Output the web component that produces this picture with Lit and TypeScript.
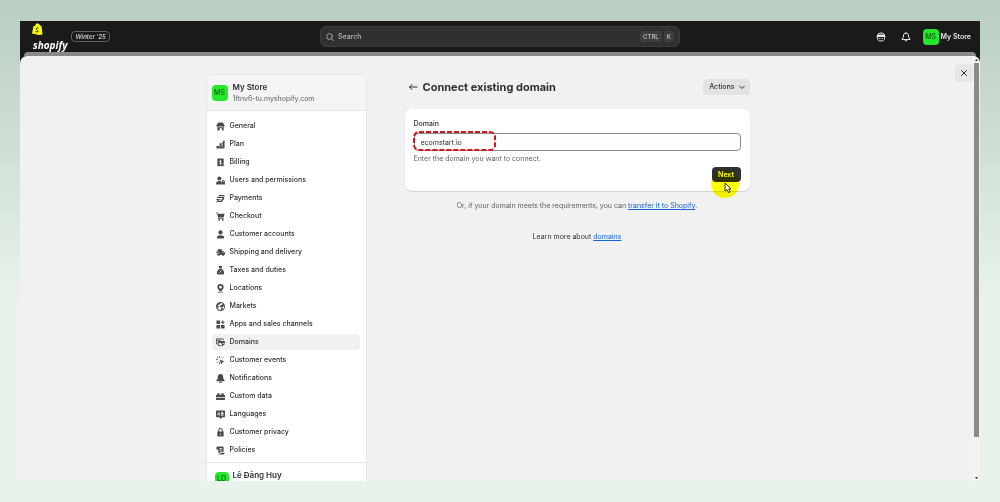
import { LitElement, html, css, svg, SVGTemplateResult } from "lit";
import { customElement, state } from "lit/decorators.js";
import { classMap } from "lit/directives/class-map.js";

const icons: Record<string, SVGTemplateResult> = {
  general: svg`<path d="M5 1h10l4 6v1.500a2.500 2.500 0 0 1-2 2.300V18a1 1 0 0 1-1 1h-3v-5H8v5H4a1 1 0 0 1-1-1v-7.200A2.500 2.500 0 0 1 1 8.500V7z"/><path class="cut" d="M4 10h12v1.500H4z"/>`,
  plan: svg`<path d="M1 19v-5l4-2v2l3-1V8l4-2v5l2-1V5l2-1V1h3v17a1 1 0 0 1-1 1z"/><path class="cut" d="M8 12h1.300v4H8zM13 10h1.300v6H13z"/>`,
  billing: svg`<path d="M3 1h14v18l-3-2-2 2-2-2-2 2-2-2-3 2z"/><path class="line" d="M12.500 6.500C10 5 7 6 7.500 8c.5 1.700 5 1.300 5 3.500 0 2-3 2.500-5 1.200M10 4v11"/>`,
  users: svg`<circle cx="7.500" cy="5.500" r="4.500"/><path d="M0 18c0-5 3-7 7.500-7 2 0 3 .3 4 1v7H1a1 1 0 0 1-1-1zM13 13v-1.500a3 3 0 0 1 6 0V13h1v6h-8v-6zm1.700 0h2.600v-1.500a1.300 1.300 0 0 0-2.600 0z"/>`,
  payments: svg`<path d="M7 2h12l-1.500 11H12l3-4H5zM4 6h3L5 9H1zM1 11h10l-1 2H6v2h5l3-3h3l-4 6H3l-3 1v-2l3-1V13H0z"/><path class="cut" d="M7 5h11v1.500H7z"/>`,
  checkout: svg`<path d="M0 1h3.500l1 3H19l-2 8H6.500l.4 1.500H17V15H5.300L2.500 3H0z"/><circle cx="7" cy="17.500" r="2"/><circle cx="15" cy="17.500" r="2"/>`,
  person: svg`<circle cx="10" cy="5.500" r="4.700"/><path d="M2 17c0-4 3-5.500 8-5.500s8 1.500 8 5.500c0 1-1 2-2 2H4c-1 0-2-1-2-2z"/>`,
  shipping: svg`<path d="M4 3h9v3h3l4 4.500V15h-2a3 3 0 0 1-5.500 0H9a3 3 0 0 1-5.500 0H2v-3h5v-1.500H0V9h5V7.500H1V6h3z"/><circle cx="6.200" cy="15" r="2"/><circle cx="15.500" cy="15" r="2"/><path class="cut" d="M14 7.500h1.500l2 2.500H14z"/>`,
  taxes: svg`<path d="M7 0h6l1 1-1.500 4h-5L6 1zM7 6h6c3 2.500 5 6 5 9.500 0 2.500-1.500 3.500-4 3.500H6c-2.500 0-4-1-4-3.500C2 12 4 8.500 7 6z"/><path class="line" d="m7.500 15 5-5.500M7.500 10v.5M12.500 14v.5"/>`,
  location: svg`<path fill-rule="evenodd" d="M10 0a7 7 0 0 1 7 7c0 3.500-3 6-5 8.500h-4C6 13 3 10.500 3 7a7 7 0 0 1 7-7zm0 4a3 3 0 1 0 0 6 3 3 0 0 0 0-6z"/><path d="M5 17h10v2H5z"/>`,
  markets: svg`<path fill-rule="evenodd" d="M10 0a10 10 0 1 0 0 20 10 10 0 0 0 0-20zm1 2 4 1.500-2 3-4 1-1 3 4 1v3l-2 3c-5 0-7-3-7.500-6L6 13l1-2-3-3 4-3zm6 7 1 1c0 3-1 5-3 6l-1-4z"/>`,
  apps: svg`<path d="M1 1h8v8H1zM1 11h8v8H1zM11 11h8v8h-8zM14 1h2.300v2.700H19V6h-2.700v3H14V6h-3V3.700h3z"/>`,
  domains: svg`<path class="stroke" d="M4 13H1V2h15v3M1 5h10M12 17H5V8h14v4"/><path d="M5 7h14v4H5zM11 11l9 3-3.500 1.500L15 19z"/>`,
  events: svg`<path d="m8 8 11 4-4.500 2L12 19z"/><path class="stroke" d="M8 0v4M8 14v4M0 8h4M14 5l2-2M2 2l3 3M2 15l3-3"/>`,
  bell: svg`<path d="M10 0c4 0 6 3 6 6v4l3 4v2H1v-2l3-4V6c0-3 2-6 6-6zM7 17h6c0 4-6 4-6 0z"/>`,
  data: svg`<path d="M3 3h5v3h4V3h5v3h1a2 2 0 0 1 2 2v3H0V8a2 2 0 0 1 2-2h1zM0 12.500h20V16a2 2 0 0 1-2 2H2a2 2 0 0 1-2-2z"/>`,
  languages: svg`<path d="M2 1h16a2 2 0 0 1 2 2v11a2 2 0 0 1-2 2h-4l-4 4-2-4H2a2 2 0 0 1-2-2V3a2 2 0 0 1 2-2z"/><path class="line" d="m3.500 12 2.500-7 2.500 7M4.500 10h3M12 5h3.500v3H12zm0 3h4v4h-4z"/>`,
  lock: svg`<path fill-rule="evenodd" d="M5 8V5a5 5 0 0 1 10 0v3h2v9a2 2 0 0 1-2 2H5a2 2 0 0 1-2-2V8zm2.200 0h5.600V5a2.800 2.800 0 0 0-5.600 0zM9 12v3h2v-3z"/>`,
  policies: svg`<path d="M3 1h11a3 3 0 0 1 3 3v9H9v2H5V8H1V4a3 3 0 0 1 2-3zM10 15h9v1a3 3 0 0 1-3 3H7a3 3 0 0 1-2-2h5z"/><path class="cut" d="M7.500 4.500h6.500V6H7.500zM7.500 8.500h6.500V10H7.500z"/>`,
};

const sections: [string, string][] = [
  ["General", "general"],
  ["Plan", "plan"],
  ["Billing", "billing"],
  ["Users and permissions", "users"],
  ["Payments", "payments"],
  ["Checkout", "checkout"],
  ["Customer accounts", "person"],
  ["Shipping and delivery", "shipping"],
  ["Taxes and duties", "taxes"],
  ["Locations", "location"],
  ["Markets", "markets"],
  ["Apps and sales channels", "apps"],
  ["Domains", "domains"],
  ["Customer events", "events"],
  ["Notifications", "bell"],
  ["Custom data", "data"],
  ["Languages", "languages"],
  ["Customer privacy", "lock"],
  ["Policies", "policies"],
];

@customElement("app-root")
export class AppRoot extends LitElement {
  @state() private current = "Domains";

  static styles = css`
    :host {
      display: block;
      box-sizing: border-box;
      height: 100vh;
      padding: 21px 20px;
      background: linear-gradient(#b9cec2, #d0dfd5 30%, #e9f3ec 60%, #e9f3ec);
      font: 500 7px/10px Inter, sans-serif;
      color: #303030;
    }
    * { box-sizing: border-box; }
    button, input { font: inherit; color: inherit; }
    button { border: 0; padding: 0; cursor: pointer; }
    a { color: #1565d8; }
    svg { display: block; flex: none; }
    .frame {
      height: 100%;
      display: flex;
      flex-direction: column;
      overflow: hidden;
      background: #1a1a1a;
    }
    .topbar {
      flex: none;
      display: grid;
      grid-template-columns: 1fr 360px 1fr;
      height: 31px;
      color: #e3e3e3;
    }
    .brand { display: flex; align-items: center; gap: 4px; padding-left: 12px; }
    .logo { display: flex; flex-direction: column; gap: 4px; }
    .wordmark {
      font: italic 700 10px/12px "Open Sans", sans-serif;
      color: #fff;
      padding-left: 1px;
    }
    .bag { fill: #fbff00; }
    .bag-letter { fill: none; stroke: #1a1a1a; stroke-width: 2; }
    .edition {
      border: 1px solid #616161;
      border-radius: 4px;
      padding: 0 3px;
      font-size: 6px;
      font-style: italic;
      font-weight: 600;
      line-height: 9px;
      color: #ccc;
    }
    .search {
      align-self: center;
      display: flex;
      align-items: center;
      gap: 4px;
      height: 21px;
      padding: 0 5px;
      border: 1px solid #3d3d3d;
      border-radius: 6px;
      background: #303030;
      color: #b5b5b5;
    }
    .search input {
      flex: 1;
      min-width: 0;
      border: 0;
      padding: 0;
      outline: 0;
      background: none;
    }
    .search input::placeholder { color: #b5b5b5; opacity: 1; }
    .keys { display: flex; gap: 2px; }
    kbd {
      padding: 0 3px;
      border-radius: 3px;
      background: #3e3e3e;
      font: 600 6px/11px Inter, sans-serif;
    }
    .tools {
      display: flex;
      align-items: center;
      justify-content: flex-end;
      gap: 12px;
      padding-right: 9px;
    }
    .shortcuts { display: flex; gap: 15px; }
    .tool { background: none; }
    .outline { fill: none; stroke: currentColor; stroke-width: 2; stroke-linecap: round; stroke-linejoin: round; }
    .solid { fill: currentColor; }
    .account {
      display: flex;
      align-items: center;
      gap: 2px;
      background: none;
      font-weight: 600;
      color: #e3e3e3;
    }
    .avatar {
      flex: none;
      width: 16px;
      height: 16px;
      border-radius: 4px;
      background: #25e82b;
      color: #0b5c12;
      text-align: center;
      font-weight: 500;
      line-height: 16px;
    }
    .edge {
      flex: none;
      height: 4px;
      margin: 0 4px;
      border-radius: 5px 5px 0 0;
      background: #898989;
    }
    .sheet {
      flex: 1;
      min-height: 0;
      display: flex;
      border-radius: 7px 7px 0 0;
      background: #f1f1f1;
      overflow: hidden;
    }
    .content {
      flex: 1;
      min-width: 0;
      display: grid;
      grid-template-columns: 161px minmax(0, 345px);
      justify-content: center;
      align-items: start;
      gap: 38px;
      padding-top: 18px;
    }
    .side {
      border: 1px solid #e6e6e6;
      border-radius: 7px;
      background: #fff;
      overflow: hidden;
    }
    .identity {
      display: flex;
      align-items: center;
      gap: 5px;
      height: 36px;
      padding: 0 5px;
      background: #f4f4f4;
      border-bottom: 1px solid #e6e6e6;
    }
    .name { display: block; font-size: 8px; line-height: 12px; font-weight: 600; }
    .url { display: block; line-height: 11px; font-weight: 400; color: #616161; }
    .nav { padding: 7px 6px 2px 5px; margin: 0; list-style: none; }
    .item {
      display: flex;
      align-items: center;
      gap: 5px;
      height: 16px;
      margin-bottom: 2px;
      padding: 0 4px;
      border-radius: 4px;
      color: #303030;
      text-decoration: none;
    }
    .selected { background: #f1f1f1; }
    .glyph { fill: #4a4a4a; }
    .cut { fill: #fff; }
    .line { fill: none; stroke: #fff; stroke-width: 1.5; }
    .stroke { fill: none; stroke: #4a4a4a; stroke-width: 2; }
    .user {
      align-items: flex-start;
      padding: 6px 8px;
      gap: 4px;
      border-top: 1px solid #e6e6e6;
      border-bottom: 0;
      background: #fff;
    }
    .small { width: 14px; height: 14px; line-height: 14px; margin-top: 3px; }
    .heading { display: flex; align-items: center; height: 25px; gap: 5px; padding-left: 3px; }
    .back { background: none; }
    h1 { flex: 1; margin: 0; font-size: 11px; line-height: 16px; font-weight: 650; }
    .actions {
      display: flex;
      align-items: center;
      gap: 4px;
      height: 16px;
      padding: 0 5px 0 6px;
      border-radius: 4px;
      background: #e3e3e3;
    }
    .card {
      display: flex;
      flex-direction: column;
      margin-top: 10px;
      padding: 10px 9px 9px;
      border-radius: 7px;
      background: #fff;
      box-shadow: 0 1px 1px #0002;
    }
    .field { position: relative; margin: 4px 0 3px; }
    .domain {
      display: block;
      width: 100%;
      height: 18px;
      padding: 0 6px;
      border: 1px solid #8a8a8a;
      border-radius: 4px;
      background: #fdfdfd;
      font-weight: 400;
      outline: 0;
    }
    .marker {
      position: absolute;
      top: -2px;
      left: -1px;
      overflow: visible;
      fill: none;
      stroke: #cf1820;
      stroke-width: 2;
      stroke-dasharray: 5 2;
    }
    .hint { font-weight: 400; color: #616161; }
    .submit { position: relative; align-self: flex-end; margin-top: 3px; }
    .next {
      display: block;
      width: 29px;
      height: 15px;
      border-radius: 4px;
      background: #303030;
      color: #fff;
      font-weight: 600;
    }
    .halo {
      position: absolute;
      top: 3px;
      left: -1px;
      width: 28px;
      height: 28px;
      border-radius: 50%;
      background: #ff0;
      mix-blend-mode: multiply;
      pointer-events: none;
    }
    .pointer { position: absolute; top: 15px; left: 12px; fill: #fff; stroke: #333; pointer-events: none; }
    .note { margin: 10px 0 0; text-align: center; font-weight: 400; color: #616161; }
    .more { margin: 21px 0 0; text-align: center; font-weight: 400; }
    .close {
      flex: none;
      align-self: flex-start;
      display: grid;
      place-items: center;
      width: 18px;
      height: 18px;
      margin: 8px 0 0 20px;
      border-radius: 4px;
      background: #e6e6e6;
    }
    .scroll {
      flex: none;
      width: 7px;
      display: flex;
      flex-direction: column;
      align-items: center;
      justify-content: space-between;
      padding: 3px 0 2px;
      background: #f3f3f3;
    }
    .track { flex: 1; width: 5px; padding: 2px 0 40px; }
    .thumb { height: 100%; background: #8a8a8a; }
  `;

  private icon(name: string) {
    return html`<svg class="glyph" width="9" height="9" viewBox="0 0 20 20" aria-hidden="true">${icons[name]}</svg>`;
  }

  render() {
    return html`
      <div class="frame">
        <header class="topbar">
          <div class="brand">
            <div class="logo">
              <svg class="bag" width="11" height="12" viewBox="0 0 22 24" aria-hidden="true">
                <path d="M3 6h3C7 2 10 0 12 1l2 1 2 3 3 1 2 17-7 1L0 21z" />
                <path class="bag-letter" d="M13 10c-3-1-5 0-4 3 1 2 4 2 3 4-1 2-3 1-5 0" />
              </svg>
              <span class="wordmark">shopify</span>
            </div>
            <span class="edition">Winter ’25</span>
          </div>
          <label class="search">
            <svg class="outline" width="8" height="8" viewBox="0 0 18 18" aria-hidden="true">
              <circle cx="8" cy="8" r="6.500" /><path d="m13 13 4 4" />
            </svg>
            <input type="search" placeholder="Search" aria-label="Search" />
            <span class="keys"><kbd>CTRL</kbd><kbd>K</kbd></span>
          </label>
          <div class="tools">
            <div class="shortcuts">
              <button class="tool" aria-label="Assistant">
                <svg class="outline" width="10" height="10" viewBox="0 0 20 20">
                  <path d="M3 6c1-3 4-4 7-4s6 1 7 4v7c0 4-3 5-7 5s-7-1-7-5zM2 9h16" />
                  <path class="solid" d="M4 6h12v2H4zM7 13h1M12 13h1" />
                </svg>
              </button>
              <button class="tool" aria-label="Notifications">
                <svg class="outline" width="10" height="10" viewBox="0 0 20 20">
                  <path d="M10 2c4 0 5 3 5 6v2l3 4v1H2v-1l3-4V8c0-3 1-6 5-6zM7.500 16c0 3 5 3 5 0" />
                </svg>
              </button>
            </div>
            <button class="account"><span class="avatar">MS</span>My Store</button>
          </div>
        </header>
        <div class="edge"></div>
        <div class="sheet">
          <div class="content">
            <aside class="side">
              <div class="identity">
                <span class="avatar">MS</span>
                <div><span class="name">My Store</span><span class="url">1ftnv6-tu.myshopify.com</span></div>
              </div>
              <ul class="nav">
                ${sections.map(
                  ([label, name]) => html`<li>
                    <a
                      href="#"
                      class=${classMap({ item: true, selected: label === this.current })}
                      @click=${(e: Event) => {
                        e.preventDefault();
                        this.current = label;
                      }}
                      >${this.icon(name)}${label}</a
                    >
                  </li>`
                )}
              </ul>
              <div class="identity user">
                <span class="avatar small">LD</span>
                <span class="name">Lê Đăng Huy</span>
              </div>
            </aside>
            <main>
              <div class="heading">
                <button class="back" aria-label="Back">
                  <svg class="outline" width="10" height="8" viewBox="0 0 20 16"><path d="M18 8H3m5-5L3 8l5 5" /></svg>
                </button>
                <h1>Connect existing domain</h1>
                <button class="actions">
                  Actions
                  <svg class="outline" width="6" height="6" viewBox="0 0 12 12"><path d="m1 4 5 5 5-5" /></svg>
                </button>
              </div>
              <section class="card">
                <label for="domain">Domain</label>
                <div class="field">
                  <input id="domain" class="domain" value="ecomstart.io" />
                  <svg class="marker" width="83" height="20" aria-hidden="true">
                    <rect x="1" y="1" width="81" height="18" rx="5" />
                  </svg>
                </div>
                <span class="hint">Enter the domain you want to connect.</span>
                <div class="submit">
                  <button class="next">Next</button>
                  <span class="halo"></span>
                  <svg class="pointer" width="8" height="11" viewBox="0 0 8 11" aria-hidden="true">
                    <path d="M1 1v8l2-1.500L4.500 10.500 6 10 4.700 7H7z" />
                  </svg>
                </div>
              </section>
              <p class="note">
                Or, if your domain meets the requirements, you can <a href="#">transfer it to Shopify</a>.
              </p>
              <p class="more">Learn more about <a href="#">domains</a></p>
            </main>
          </div>
          <button class="close" aria-label="Close">
            <svg class="outline" width="6" height="6" viewBox="0 0 12 12"><path d="m1 1 10 10M11 1 1 11" /></svg>
          </button>
          <div class="scroll">
            <svg width="3" height="2" viewBox="0 0 3 2"><path class="solid" d="M0 2 1.500 0 3 2z" /></svg>
            <div class="track"><div class="thumb"></div></div>
            <svg width="3" height="2" viewBox="0 0 3 2"><path class="solid" d="m0 0 1.500 2L3 0z" /></svg>
          </div>
        </div>
      </div>
    `;
  }
}
